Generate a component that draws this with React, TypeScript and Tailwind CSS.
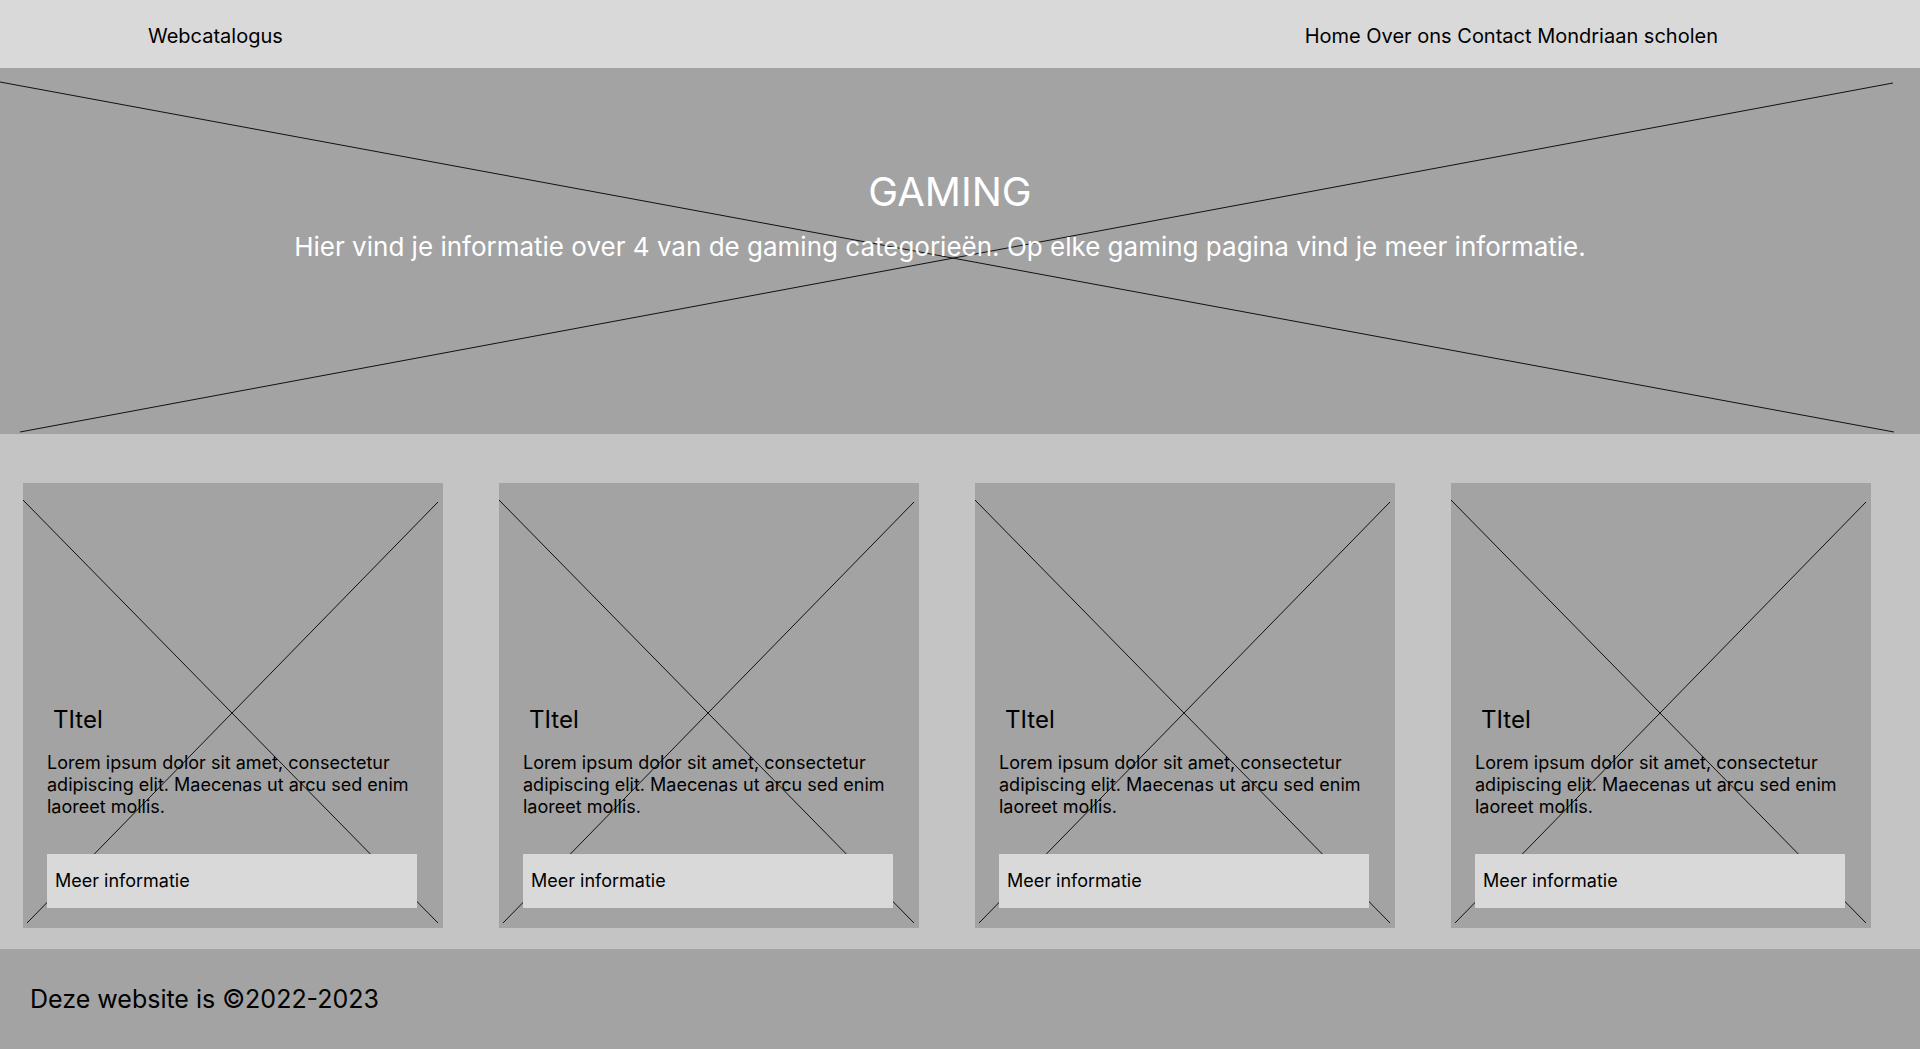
export default function App() {
  const cards = [0, 1, 2, 3];
  return (
    <div className="w-[1920px] h-[1049px] flex flex-col font-['Inter',sans-serif] text-black overflow-hidden">
      <header className="h-[68px] shrink-0 bg-[#d9d9d9] flex items-start pt-[24px] text-[20px] leading-[24px]">
        <div className="ml-[148px]">Webcatalogus</div>
        <nav className="ml-auto mr-[202px]">
          <a>Home</a> <a>Over ons</a> <a>Contact</a> <a>Mondriaan scholen</a>
        </nav>
      </header>

      <section className="relative h-[366px] shrink-0 bg-[#a3a3a3] flex flex-col items-center text-white">
        <svg className="absolute inset-0" width="1920" height="366" viewBox="0 0 1920 366">
          <line x1="0" y1="14" x2="1894" y2="364" stroke="#111" strokeWidth="1" />
          <line x1="20" y1="364" x2="1893" y2="15" stroke="#111" strokeWidth="1" />
        </svg>
        <h1 className="relative mt-[100px] mr-[20px] text-[40px] leading-[48px] font-normal">GAMING</h1>
        <p className="relative mt-[15px] mr-[40px] text-[26px] leading-[32px]">
          Hier vind je informatie over 4 van de gaming categorieën. Op elke gaming pagina vind je meer informatie.
        </p>
      </section>

      <section className="h-[515px] shrink-0 bg-[#c4c4c4] flex gap-[56px] pl-[23px] pt-[49px]">
        {cards.map((i) => (
          <div key={i} className="relative w-[420px] h-[445px] bg-[#a3a3a3] flex flex-col items-start pl-[24px] pt-[222px]">
            <svg className="absolute inset-0" width="420" height="445" viewBox="0 0 420 445">
              <line x1="0" y1="17" x2="415" y2="440" stroke="#111" strokeWidth="1" />
              <line x1="415" y1="19" x2="4" y2="440" stroke="#111" strokeWidth="1" />
            </svg>
            <h2 className="relative ml-[6px] text-[24px] leading-[29px] font-normal">TItel</h2>
            <p className="relative mt-[18px] w-[370px] text-[18px] leading-[22px]">
              Lorem ipsum dolor sit amet, consectetur adipiscing elit. Maecenas ut arcu sed enim laoreet mollis.
            </p>
            <button className="relative mt-[36px] w-[370px] h-[54px] bg-[#d9d9d9] text-left pl-[8px] text-[18px] leading-[22px]">
              Meer informatie
            </button>
          </div>
        ))}
      </section>

      <footer className="h-[100px] shrink-0 bg-[#a3a3a3] pl-[30px] pt-[35px] text-[25px] leading-[30px]">
        Deze website is ©2022-2023
      </footer>
    </div>
  );
}
